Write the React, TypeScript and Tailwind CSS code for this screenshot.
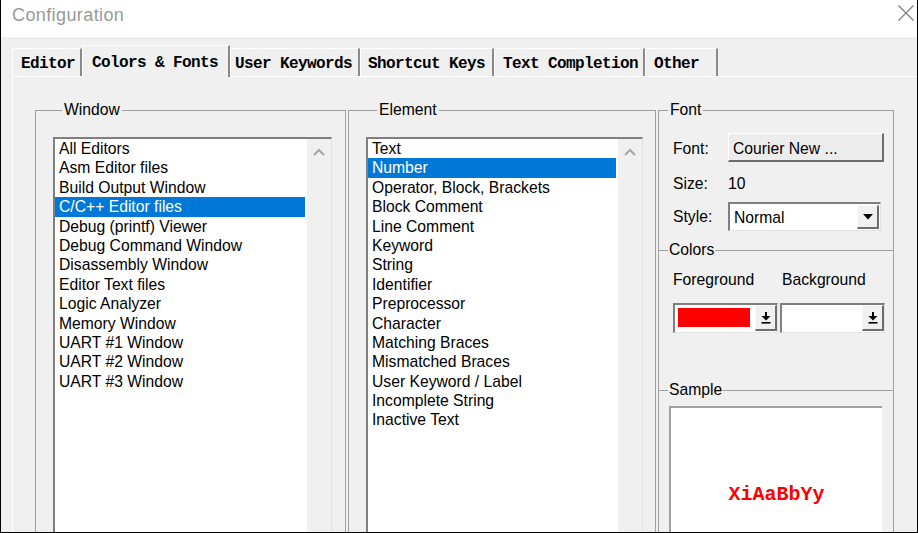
import React from "react";

const WINDOWS = [
  "All Editors",
  "Asm Editor files",
  "Build Output Window",
  "C/C++ Editor files",
  "Debug (printf) Viewer",
  "Debug Command Window",
  "Disassembly Window",
  "Editor Text files",
  "Logic Analyzer",
  "Memory Window",
  "UART #1 Window",
  "UART #2 Window",
  "UART #3 Window",
];

const ELEMENTS = [
  "Text",
  "Number",
  "Operator, Block, Brackets",
  "Block Comment",
  "Line Comment",
  "Keyword",
  "String",
  "Identifier",
  "Preprocessor",
  "Character",
  "Matching Braces",
  "Mismatched Braces",
  "User Keyword / Label",
  "Incomplete String",
  "Inactive Text",
];

const TABS = [
  { label: "Editor", cls: "w-[70px] pl-[8px]" },
  { label: "Colors & Fonts", cls: "w-[148px] pl-[9px]", active: true },
  { label: "User Keywords", cls: "w-[130px] pl-[4px]" },
  { label: "Shortcut Keys", cls: "w-[134px] pl-[7px]" },
  { label: "Text Completion", cls: "w-[151px] pl-[8px]" },
  { label: "Other", cls: "w-[73px] pl-[8px]" },
];

function Chevron() {
  return (
    <svg width="12" height="8" viewBox="0 0 12 8">
      <polyline points="1,7 6,2 11,7" fill="none" stroke="#a6a6a6" strokeWidth="2" />
    </svg>
  );
}

function ListBox({ items, selected, width }: { items: string[]; selected: number; width: string }) {
  return (
    <div className={`flex h-[420px] border-t-2 border-l-2 border-r border-[#7f7f7f] border-r-[#e3e3e3] bg-white ${width}`}>
      <ul className="flex-1 pr-[2px]">
        {items.map((it, i) => (
          <li
            key={it}
            className={`h-[19.4px] pl-[4px] leading-[19.4px] whitespace-nowrap ${
              i === selected ? "bg-[#0078d7] text-white" : "text-black"
            }`}
          >
            {it}
          </li>
        ))}
      </ul>
      <div className="flex w-[24px] justify-center bg-[#f0f0f0] pt-[9px]">
        <div>
          <Chevron />
        </div>
      </div>
    </div>
  );
}

function Divider({ label }: { label: string }) {
  return (
    <div className="flex h-[18px] items-center">
      <span className="h-px w-[9px] bg-[#a0a0a0]" />
      <span className="px-[1px] leading-[18px]">{label}</span>
      <span className="h-px flex-1 bg-[#a0a0a0]" />
    </div>
  );
}

function PickArrow() {
  return (
    <svg width="10" height="12" viewBox="0 0 10 12">
      <rect x="4" y="0" width="2" height="4" fill="#000" />
      <polygon points="0.5,4 9.5,4 5,8.5" fill="#000" />
      <rect x="0.5" y="10" width="9" height="1.6" fill="#000" />
    </svg>
  );
}

function ColorPick({ color }: { color: string }) {
  return (
    <div className="flex h-[30px] w-[105px] border-t-2 border-l-2 border-r border-b border-[#7f7f7f] border-r-[#e3e3e3] border-b-[#e3e3e3] bg-white">
      <div className="ml-[3px] mt-[3px] mr-[5px] h-[19px] flex-1" style={{ background: color }} />
      <div className="flex h-[26px] w-[22px] items-center justify-center border-l border-t border-r-2 border-b-2 border-[#f8f8f8] border-r-[#6d6d6d] border-b-[#6d6d6d] bg-[#f0f0f0]">
        <PickArrow />
      </div>
    </div>
  );
}

export default function App() {
  return (
    <div className="flex h-[533px] w-[918px] flex-col overflow-hidden border-x border-b border-black font-['Liberation_Sans',Arial,sans-serif] text-[15.7px] text-black">
      {/* title bar */}
      <div className="flex h-[37px] shrink-0 items-start justify-between bg-white pl-[11px] pr-[3px]">
        <span className="pt-[4px] text-[18px] leading-[22px] tracking-[0.4px] text-[#999999]">Configuration</span>
        <svg className="mt-[5px]" width="16" height="16" viewBox="0 0 16 16">
          <path d="M0.5 0.5 L15.5 15.5 M15.5 0.5 L0.5 15.5" stroke="#7a7a7a" strokeWidth="1.1" />
        </svg>
      </div>

      <div className="flex flex-1 flex-col bg-[#f0f0f0] pt-[8px]">
        {/* tabs */}
        <div className="flex items-end pl-[11px] font-['Liberation_Mono',monospace] text-[16px] font-bold tracking-[-0.6px]">
          {TABS.map((t) =>
            t.active ? (
              <div
                key={t.label}
                className={`relative z-10 -mb-px flex h-[32px] items-center border-l border-t border-r-2 border-white border-r-[#8a8a8a] bg-[#f0f0f0] pt-[2px] ${t.cls}`}
              >
                {t.label}
              </div>
            ) : (
              <div
                key={t.label}
                className={`flex h-[28px] items-center border-l border-t border-r-2 border-white border-r-[#8a8a8a] bg-[#f0f0f0] pt-[3px] ${t.cls}`}
              >
                {t.label}
              </div>
            )
          )}
        </div>

        {/* tab panel */}
        <div className="ml-[11px] flex flex-1 border-l border-t border-white pl-[22px] pt-[24px]">
          <fieldset className="h-[460px] w-[311px] min-w-0 border border-[#a0a0a0] px-[17px]">
            <legend className="ml-[9px] px-[2px] leading-[18px]">Window</legend>
            <div className="mt-[18px]">
              <ListBox items={WINDOWS} selected={3} width="w-[279px]" />
            </div>
          </fieldset>

          <fieldset className="ml-[2px] h-[460px] w-[308px] min-w-0 border border-[#a0a0a0] px-[17px]">
            <legend className="ml-[11px] px-[2px] leading-[18px]">Element</legend>
            <div className="mt-[18px]">
              <ListBox items={ELEMENTS} selected={1} width="w-[277px]" />
            </div>
          </fieldset>

          <fieldset className="ml-[2px] h-[460px] w-[236px] min-w-0 border border-[#a0a0a0]">
            <legend className="ml-[9px] px-[2px] leading-[18px]">Font</legend>

            <div className="mt-[14px] flex items-center pl-[14px]">
              <span className="w-[55px] pt-[2px]">Font:</span>
              <div className="flex h-[29px] w-[156px] items-center border-l border-t border-r-2 border-b-2 border-white border-r-[#6d6d6d] border-b-[#6d6d6d] bg-[#ececec] pl-[4px] pt-[4px]">
                Courier New ...
              </div>
            </div>

            <div className="mt-[13px] flex h-[18px] items-center pl-[14px] leading-[18px]">
              <span className="w-[55px]">Size:</span>
              <span>10</span>
            </div>

            <div className="mt-[9px] flex items-center pl-[14px]">
              <span className="w-[55px] pt-[1px]">Style:</span>
              <div className="flex h-[29px] w-[153px] border-t-2 border-l-2 border-r border-b border-[#7f7f7f] border-r-[#e3e3e3] border-b-[#e3e3e3] bg-white">
                <span className="flex-1 pl-[4px] pt-[1px] leading-[25px]">Normal</span>
                <div className="my-[1px] mr-[1px] flex w-[22px] items-center justify-center border-l border-t border-r-2 border-b-2 border-[#f8f8f8] border-r-[#6d6d6d] border-b-[#6d6d6d] bg-[#f0f0f0]">
                  <svg width="10" height="6" viewBox="0 0 10 6">
                    <polygon points="0,0 10,0 5,5.5" fill="#000" />
                  </svg>
                </div>
              </div>
            </div>

            <div className="mt-[10px]">
              <Divider label="Colors" />
            </div>

            <div className="mt-[12px] flex h-[18px] pl-[14px] leading-[18px]">
              <span className="w-[109px]">Foreground</span>
              <span>Background</span>
            </div>

            <div className="mt-[14px] flex gap-[2px] pl-[14px]">
              <ColorPick color="#ff0000" />
              <ColorPick color="#ffffff" />
            </div>

            <div className="mt-[48px]">
              <Divider label="Sample" />
            </div>

            <div className="ml-[10px] mt-[7px] h-[200px] w-[213px] border-l-2 border-t-2 border-[#a0a0a0] bg-white pt-[75px] text-center font-['Liberation_Mono',monospace] text-[20px] font-bold leading-[24px] text-[#ff0000]">
              XiAaBbYy
            </div>
          </fieldset>
        </div>
      </div>
    </div>
  );
}
